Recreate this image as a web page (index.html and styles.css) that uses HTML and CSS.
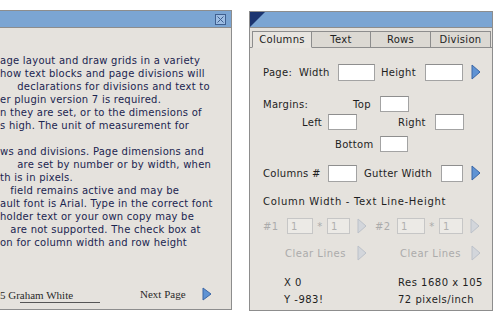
FILE: index.html
```html
<!DOCTYPE html>
<html lang="en">
<head>
    <meta charset="UTF-8">
    <title>Grid Designer</title>
    <link rel="stylesheet" href="styles.css">
</head>
<body>
    <div class="desk">
        <section class="help">
            <header class="bar help-bar">
                <span class="close">
                    <svg width="11" height="11" viewBox="0 0 11 11"><rect x="0.5" y="0.5" width="10" height="10" fill="#9dbde3" stroke="#3f5f8f"/><path d="M2.5 2.5 L8.5 8.5 M8.5 2.5 L2.5 8.5" stroke="#3f5f8f" stroke-width="1"/></svg>
                </span>
            </header>
<pre class="copy">age layout and draw grids in a variety
how text blocks and page divisions will
     declarations for divisions and text to
er plugin version 7 is required.
n they are set, or to the dimensions of
s high. The unit of measurement for

ws and divisions. Page dimensions and
     are set by number or by width, when
th is in pixels.
   field remains active and may be
ault font is Arial. Type in the correct font
holder text or your own copy may be
   are not supported. The check box at
on for column width and row height</pre>
            <footer class="help-foot">
                <div class="credit">
                    <span>5 Graham White</span>
                    <div class="credit-line"></div>
                </div>
                <span class="next">Next Page</span>
                <svg class="arrow" width="10" height="14" viewBox="0 0 10 14"><polygon points="1,1 9,7 1,13" fill="#5f93d4" stroke="#3a66a6"/></svg>
            </footer>
        </section>

        <section class="tool">
            <header class="bar tool-bar">
                <svg width="15" height="15" viewBox="0 0 15 15"><polygon points="0,0 15,0 0,15" fill="#1b3470"/></svg>
            </header>
            <nav class="tabs">
                <span class="tab active">Columns</span>
                <span class="tab">Text</span>
                <span class="tab">Rows</span>
                <span class="tab">Division</span>
            </nav>
            <div class="form">
                <div class="row row-page">
                    <label class="w-page">Page:&nbsp; Width</label>
                    <input class="box w37" type="text">
                    <label class="w-height">Height</label>
                    <input class="box w38" type="text">
                    <svg class="arrow" width="10" height="16" viewBox="0 0 10 16"><polygon points="1,1 9,8 1,15" fill="#5f93d4" stroke="#3a66a6"/></svg>
                </div>
                <div class="row row-margins">
                    <label class="w-margins">Margins:</label>
                    <label class="w-top">Top</label>
                    <input class="box w29" type="text">
                </div>
                <div class="row row-sides">
                    <label class="w-left">Left</label>
                    <input class="box w29" type="text">
                    <label class="w-right">Right</label>
                    <input class="box w29" type="text">
                </div>
                <div class="row row-bottom">
                    <label class="w-bottom">Bottom</label>
                    <input class="box w28" type="text">
                </div>
                <div class="row row-columns">
                    <label class="w-columns">Columns #</label>
                    <input class="box w29" type="text">
                    <label class="w-gutter">Gutter Width</label>
                    <input class="box w22" type="text">
                    <svg class="arrow" width="10" height="16" viewBox="0 0 10 16"><polygon points="1,1 9,8 1,15" fill="#5f93d4" stroke="#3a66a6"/></svg>
                </div>
                <div class="row row-heading">Column Width - Text Line-Height</div>
                <div class="row row-lines off">
                    <label class="w-num">#1</label>
                    <input class="box w26" type="text" value="1" disabled>
                    <span class="times">*</span>
                    <input class="box w23" type="text" value="1" disabled>
                    <svg class="arrow" width="10" height="16" viewBox="0 0 10 16"><polygon points="1,1 9,8 1,15" fill="#d3d6db" stroke="#bcc1c9"/></svg>
                    <label class="w-num2">#2</label>
                    <input class="box w28" type="text" value="1" disabled>
                    <span class="times">*</span>
                    <input class="box w24" type="text" value="1" disabled>
                    <svg class="arrow" width="10" height="16" viewBox="0 0 10 16"><polygon points="1,1 9,8 1,15" fill="#d3d6db" stroke="#bcc1c9"/></svg>
                </div>
                <div class="row row-clear off">
                    <span class="w-clear">Clear Lines</span>
                    <svg class="arrow" width="10" height="16" viewBox="0 0 10 16"><polygon points="1,1 9,8 1,15" fill="#d3d6db" stroke="#bcc1c9"/></svg>
                    <span class="w-clear2">Clear Lines</span>
                    <svg class="arrow" width="10" height="16" viewBox="0 0 10 16"><polygon points="1,1 9,8 1,15" fill="#d3d6db" stroke="#bcc1c9"/></svg>
                </div>
                <div class="row row-info row-x">
                    <span class="w-coord">X 0</span>
                    <span class="w-res">Res 1680 x 1050</span>
                </div>
                <div class="row row-info row-y">
                    <span class="w-coord">Y -983!</span>
                    <span class="w-res">72 pixels/inch</span>
                </div>
            </div>
        </section>
    </div>
</body>
</html>
```

FILE: styles.css
```css
body {
    margin: 0;
    background-color: #fff;
    font-family: "DejaVu Sans", Verdana, sans-serif;
    font-size: 10px;
    color: #1e1e1e;
    overflow: hidden;
}
.desk {
    display: flex;
    align-items: flex-start;
    gap: 17px;
    padding-top: 10px;
}
.bar {
    background-color: #7ba5d3;
    border-bottom: 1px solid #8d8d8d;
    display: flex;
}

/* help window */
.help {
    width: 231px;
    height: 298px;
    background-color: #e5e2dd;
    border: 1px solid #8d8d8d;
    border-left: none;
    display: flex;
    flex-direction: column;
}
.help-bar {
    height: 16px;
    justify-content: flex-end;
    align-items: center;
    padding-right: 5px;
}
.close svg {
    display: block;
}
.copy {
    margin: 0;
    padding-top: 26px;
    font-family: "DejaVu Sans", Verdana, sans-serif;
    font-size: 10px;
    line-height: 13px;
    letter-spacing: 0.25px;
    color: #1b2550;
    white-space: pre;
    overflow: hidden;
}
.help-foot {
    margin-top: auto;
    height: 26px;
    padding-bottom: 2px;
    display: flex;
    align-items: center;
    font-family: "Liberation Serif", "Times New Roman", serif;
    font-size: 11px;
    color: #2a2a2a;
}
.credit {
    width: 140px;
    display: flex;
    flex-direction: column;
    padding-top: 4px;
}
.credit span {
    line-height: 13px;
}
.credit-line {
    margin-left: 20px;
    width: 80px;
    height: 1px;
    background-color: #555;
}
.next {
    width: 62px;
}
.arrow {
    display: block;
    flex-shrink: 0;
}

/* tool palette */
.tool {
    margin-top: 1px;
    width: 242px;
    height: 298px;
    background-color: #e5e2dd;
    border: 1px solid #8d8d8d;
}
.tool-bar {
    height: 15px;
}
.tool-bar svg {
    display: block;
}
.tabs {
    display: flex;
    padding: 3px 0 0 2px;
    border-bottom: 1px solid #8d8d8d;
    height: 16px;
}
.tab {
    box-sizing: border-box;
    width: 60px;
    height: 17px;
    border: 1px solid #8d8d8d;
    border-left: none;
    background-color: #dcd9d3;
    text-align: center;
    line-height: 15px;
    font-size: 10px;
    letter-spacing: 0.3px;
}
.tab:first-child {
    border-left: 1px solid #8d8d8d;
}
.tab.active {
    background-color: #e8e5e0;
    border-bottom-color: #e8e5e0;
}
.tabs .tab:nth-child(2) {
    width: 59px;
}

.form {
    padding-left: 13px;
    display: flex;
    flex-direction: column;
    letter-spacing: 0.3px;
}
.row {
    display: flex;
    align-items: center;
    white-space: nowrap;
}
.row label, .row span {
    flex-shrink: 0;
}
.box {
    box-sizing: border-box;
    height: 16px;
    padding: 0 0 0 3px;
    margin: 0;
    border: 1px solid #a3a3a3;
    border-top-color: #8e8e8e;
    background-color: #fff;
    font-family: "DejaVu Sans", Verdana, sans-serif;
    font-size: 10px;
    color: #1e1e1e;
    flex-shrink: 0;
}
.box:disabled {
    background-color: #eceae6;
    border-color: #c6c6c6;
    color: #b0b0b0;
}
.w22 { width: 22px; }
.w23 { width: 23px; }
.w24 { width: 24px; }
.w26 { width: 26px; }
.w28 { width: 28px; }
.w29 { width: 29px; }
.w37 { width: 37px; }
.w38 { width: 38px; }

.row-page {
    height: 20px;
    margin-top: 14px;
}
.row-page .box {
    height: 17px;
}
.w-page { width: 75px; }
.w-height { width: 44px; margin-left: 6px; }
.row-page .arrow { margin-left: 8px; }

.row-margins {
    height: 16px;
    margin-top: 14px;
}
.w-margins { width: 90px; }
.w-top { width: 27px; }

.row-sides {
    height: 16px;
    margin-top: 2px;
    padding-left: 39px;
}
.w-left { width: 26px; }
.w-right { width: 37px; margin-left: 41px; }

.row-bottom {
    height: 16px;
    margin-top: 6px;
    padding-left: 72px;
}
.w-bottom { width: 45px; }

.row-columns {
    height: 18px;
    margin-top: 12px;
}
.row-columns .box {
    height: 17px;
}
.w-columns { width: 65px; }
.w-gutter { width: 77px; margin-left: 7px; }
.row-columns .arrow { margin-left: 8px; }

.row-heading {
    height: 14px;
    margin-top: 12px;
    letter-spacing: 0.7px;
}

.off {
    color: #ababab;
}
.row-lines {
    height: 18px;
    margin-top: 9px;
}
.w-num { width: 24px; }
.times { width: 14px; text-align: center; }
.row-lines .arrow { margin-left: 7px; }
.w-num2 { width: 22px; margin-left: 8px; }

.row-clear {
    height: 18px;
    margin-top: 9px;
    padding-left: 22px;
    letter-spacing: 0.5px;
}
.w-clear { width: 72px; }
.w-clear2 { width: 71px; margin-left: 33px; }

.row-info {
    height: 14px;
    padding-left: 21px;
    letter-spacing: 0.5px;
}
.row-x { margin-top: 13px; }
.row-y { margin-top: 3px; }
.w-coord { width: 114px; }
.w-res {
    width: 85px;
    overflow: hidden;
}
```
